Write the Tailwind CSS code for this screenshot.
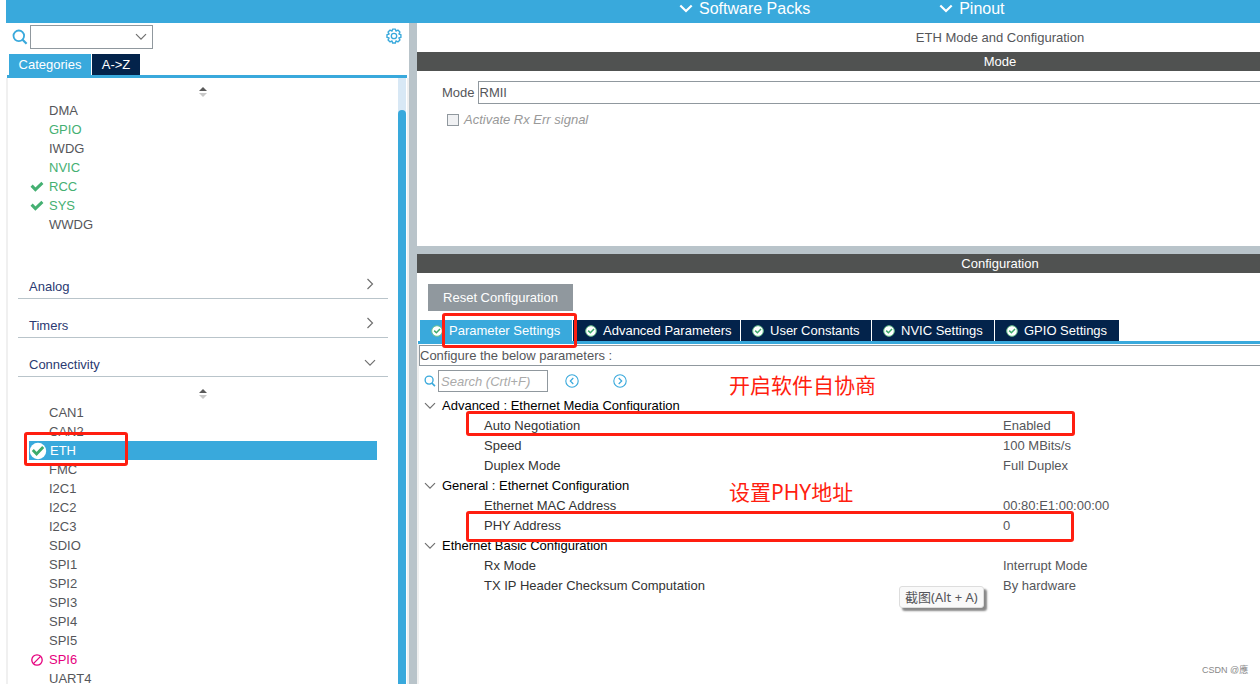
<!DOCTYPE html>
<html lang="en">
<head>
<meta charset="utf-8">
<title>ETH Mode and Configuration</title>
<script src="https://cdn.jsdelivr.net/npm/@tailwindcss/browser@4"></script>
</head>
<body class="bg-white">
<svg class="hidden" xmlns="http://www.w3.org/2000/svg">
  <symbol id="magnifier" viewBox="0 0 16 16"><circle cx="6.8" cy="6.8" r="5.3" fill="none" stroke="#39a9dc" stroke-width="1.8"/><path d="M10.6 10.8 14.6 14.8" stroke="#39a9dc" stroke-width="2.2"/></symbol>
  <symbol id="down" viewBox="0 0 12 8"><path d="M1 1.2 6 6.2 11 1.2" fill="none" stroke="currentColor" stroke-width="1.2"/></symbol>
  <symbol id="down-bold" viewBox="0 0 14 9"><path d="M1.3 1.5 7 7 12.7 1.5" fill="none" stroke="currentColor" stroke-width="2.2"/></symbol>
  <symbol id="right" viewBox="0 0 8 12"><path d="M1.5 1 6.5 6 1.5 11" fill="none" stroke="currentColor" stroke-width="1.2"/></symbol>
  <symbol id="sorter" viewBox="0 0 8 12"><path d="M0 5 4 1 8 5Z" fill="#5a5a5a"/><path d="M0 7H8L4 11Z" fill="#c8c8c8"/></symbol>
  <symbol id="tick" viewBox="0 0 14 12"><path d="M1.6 4.6 5.4 8.6 12.4 1.8" fill="none" stroke="#45b072" stroke-width="3"/></symbol>
  <symbol id="tick-circle" viewBox="0 0 18 18"><circle cx="9" cy="9" r="8.2" fill="#fff"/><path d="M3.8 8 7.6 12 14.2 5" fill="none" stroke="#3dab6b" stroke-width="2.8"/></symbol>
  <symbol id="tab-tick" viewBox="0 0 12 12"><circle cx="6" cy="6" r="5.3" fill="#fff" stroke="#6cc48f" stroke-width="1"/><path d="M3.2 5.6 5.4 7.8 9 4.1" fill="none" stroke="#3dab6b" stroke-width="1.5"/></symbol>
  <symbol id="banned" viewBox="0 0 12 12"><circle cx="6" cy="6" r="5.2" fill="none" stroke="#e6007e" stroke-width="1.3"/><path d="M2.4 9.6 9.6 2.4" stroke="#e6007e" stroke-width="1.3"/></symbol>
  <symbol id="gear" viewBox="0 0 18 18"><path d="M7.6 1.2h2.8l.6 2 1.9-1 2 2-1 1.9 2 .6v2.8l-2 .6 1 1.9-2 2-1.9-1-.6 2.1H7.6l-.6-2.1-1.9 1-2-2 1-1.9-2.1-.6V6.700l2.100-.6-1-1.900 2-2 1.900 1Z" transform="translate(0 .9)" fill="none" stroke="#39a9dc" stroke-width="1.4" stroke-linejoin="round"/><circle cx="9" cy="9" r="2.700" fill="none" stroke="#39a9dc" stroke-width="1.300"/></symbol>
  <symbol id="prev" viewBox="0 0 14 14"><circle cx="7" cy="7" r="6.2" fill="none" stroke="#39a9dc" stroke-width="1.1"/><path d="M8.3 4 5.3 7 8.3 10" fill="none" stroke="#39a9dc" stroke-width="1.2"/></symbol>
  <symbol id="next" viewBox="0 0 14 14"><circle cx="7" cy="7" r="6.2" fill="none" stroke="#39a9dc" stroke-width="1.1"/><path d="M5.7 4 8.7 7 5.7 10" fill="none" stroke="#39a9dc" stroke-width="1.2"/></symbol>
</svg>

<div class="relative flex h-screen flex-col overflow-hidden pl-1.5 font-['Liberation_Sans',Arial,sans-serif] text-[13px] leading-[19px] text-[#55565a]">
  <nav class="flex h-[23px] shrink-0 items-start gap-[129px] bg-[#39a9dc] pl-[673px] text-base leading-[17px] text-white">
    <button class="flex items-center gap-1.5"><svg class="h-[9px] w-3.5"><use href="#down-bold"/></svg>Software Packs</button>
    <button class="flex items-center gap-1.5"><svg class="h-[9px] w-3.5"><use href="#down-bold"/></svg>Pinout</button>
  </nav>

  <div class="flex min-h-0 flex-1">
    <aside class="flex w-[403px] shrink-0 flex-col">
      <div class="flex h-[31px] shrink-0 items-start pt-0.5 pr-1.5 pl-1.5">
        <svg class="mt-1 size-4"><use href="#magnifier"/></svg>
        <div class="relative ml-0.5">
          <select aria-label="Search peripherals" class="block h-6 w-[123px] appearance-none border border-[#90989e] bg-white"><option></option></select>
          <svg class="pointer-events-none absolute top-2 right-1.5 h-2 w-3 text-[#707070]"><use href="#down"/></svg>
        </div>
        <button aria-label="Settings" class="mt-0.5 ml-auto"><svg class="size-[18px]"><use href="#gear"/></svg></button>
      </div>
      <div class="mr-0.5 ml-px flex h-6 shrink-0 gap-px border-b-3 border-[#39a9dc] pl-0.5 text-white">
        <button class="w-[82px] bg-[#39a9dc]">Categories</button>
        <button class="w-12 bg-[#03234b]">A-&gt;Z</button>
      </div>
      <div class="flex min-h-0 flex-1 border-x-2 border-[#f0f0f0]">
        <div class="min-w-0 flex-1 overflow-hidden">
          <div class="flex h-[23px] justify-center pt-2"><svg class="h-3 w-2"><use href="#sorter"/></svg></div>
          <ul class="mx-[21px] h-[159px]">
            <li class="pl-5">DMA</li>
            <li class="pl-5 text-[#45b072]">GPIO</li>
            <li class="pl-5">IWDG</li>
            <li class="pl-5 text-[#45b072]">NVIC</li>
            <li class="flex items-center gap-1 text-[#45b072]"><span class="flex w-4 justify-center"><svg class="h-3 w-3.5"><use href="#tick"/></svg></span>RCC</li>
            <li class="flex items-center gap-1 text-[#45b072]"><span class="flex w-4 justify-center"><svg class="h-3 w-3.5"><use href="#tick"/></svg></span>SYS</li>
            <li class="pl-5">WWDG</li>
          </ul>
          <div class="mx-2.5 text-[#2b3a72]">
            <button class="flex h-[39px] w-full items-end justify-between border-b border-[#b9c4ca] pr-3.5 pb-0.5 pl-[11px]">Analog<svg class="mb-1.5 h-3 w-2 text-[#707070]"><use href="#right"/></svg></button>
            <button class="flex h-[39px] w-full items-end justify-between border-b border-[#b9c4ca] pr-3.5 pb-0.5 pl-[11px]">Timers<svg class="mb-1.5 h-3 w-2 text-[#707070]"><use href="#right"/></svg></button>
            <button class="flex h-[39px] w-full items-end justify-between border-b border-[#b9c4ca] pr-3 pb-0.5 pl-[11px]">Connectivity<svg class="mb-[7px] h-2 w-3 text-[#707070]"><use href="#down"/></svg></button>
          </div>
          <div class="flex h-[26px] justify-center pt-[11px]"><svg class="h-3 w-2"><use href="#sorter"/></svg></div>
          <ul class="mx-[21px]">
            <li class="pl-5">CAN1</li>
            <li class="pl-5">CAN2</li>
            <li class="flex h-[19px] items-center gap-[3px] bg-[#39a9dc] text-white"><svg class="size-[18px]"><use href="#tick-circle"/></svg>ETH</li>
            <li class="pl-5">FMC</li>
            <li class="pl-5">I2C1</li>
            <li class="pl-5">I2C2</li>
            <li class="pl-5">I2C3</li>
            <li class="pl-5">SDIO</li>
            <li class="pl-5">SPI1</li>
            <li class="pl-5">SPI2</li>
            <li class="pl-5">SPI3</li>
            <li class="pl-5">SPI4</li>
            <li class="pl-5">SPI5</li>
            <li class="flex items-center gap-1 text-[#e6007e]"><span class="flex w-4 justify-center"><svg class="size-3"><use href="#banned"/></svg></span>SPI6</li>
            <li class="pl-5">UART4</li>
          </ul>
        </div>
        <div class="mr-px w-2 bg-[#d8e8f5] pt-8"><div class="h-full rounded-t bg-[#39a9dc]"></div></div>
      </div>
    </aside>

    <div class="w-2 shrink-0 bg-[#b9c4ca]"></div>

    <main class="min-w-0 flex-1 overflow-hidden">
      <div class="flex h-full min-w-[1166px] flex-col">
        <h1 class="h-[29px] pt-[5px] text-center">ETH Mode and Configuration</h1>
        <h2 class="h-[19px] bg-[#505251] text-center text-white">Mode</h2>
        <section class="h-[175px] pt-2.5 pl-[25px]">
          <div class="flex items-center gap-[3px]">
            <label for="mode">Mode</label>
            <select id="mode" class="h-[23px] flex-1 appearance-none border border-[#90989e] bg-white pl-px"><option>RMII</option></select>
          </div>
          <label class="mt-1.5 ml-[5px] flex items-center gap-[5px] text-[#999] italic"><input type="checkbox" disabled class="size-3 appearance-none border border-[#90989e] bg-[#f0f1f3]">Activate Rx Err signal</label>
        </section>
        <div class="h-2 bg-[#b9c4ca]"></div>
        <h2 class="h-[19px] bg-[#505251] text-center text-white">Configuration</h2>
        <section class="flex min-h-0 flex-1 flex-col pt-[11px]">
          <button class="ml-[11px] block h-[27px] w-[145px] bg-[#90989e] text-white">Reset Configuration</button>
          <div class="mt-[9px] ml-px flex h-6 gap-px border-b-3 border-[#39a9dc] pl-0.5 text-white">
            <button class="flex w-[152px] items-center gap-1.5 bg-[#39a9dc] pl-[11px]"><svg class="size-3"><use href="#tab-tick"/></svg>Parameter Settings</button>
            <button class="flex w-[167px] items-center gap-1.5 bg-[#03234b] pl-3"><svg class="size-3"><use href="#tab-tick"/></svg>Advanced Parameters</button>
            <button class="flex w-[130px] items-center gap-1.5 bg-[#03234b] pl-[11px]"><svg class="size-3"><use href="#tab-tick"/></svg>User Constants</button>
            <button class="flex w-[122px] items-center gap-1.5 bg-[#03234b] pl-[11px]"><svg class="size-3"><use href="#tab-tick"/></svg>NVIC Settings</button>
            <button class="flex w-[124px] items-center gap-1.5 bg-[#03234b] pl-[11px]"><svg class="size-3"><use href="#tab-tick"/></svg>GPIO Settings</button>
          </div>
          <div class="min-h-0 flex-1 border-l-2 border-[#f0f0f0] pt-px">
            <p class="h-[21px] border border-[#90989e]">Configure the below parameters :</p>
            <div class="flex h-[30px] items-center pl-[5px]">
              <svg class="mr-0.5 size-3"><use href="#magnifier"/></svg>
              <input type="search" aria-label="Search parameters" placeholder="Search (Crtl+F)" class="h-[22px] w-[110px] border border-[#90989e] px-0.5 italic placeholder:text-[#aaa]">
              <button aria-label="Previous" class="ml-[17px]"><svg class="size-3.5"><use href="#prev"/></svg></button>
              <button aria-label="Next" class="ml-[34px]"><svg class="size-3.5"><use href="#next"/></svg></button>
            </div>
            <table class="w-full table-fixed border-collapse leading-5">
              <colgroup><col class="w-[584px]"><col></colgroup>
              <tbody>
                <tr><th colspan="2" class="p-0 pl-[5px] text-left font-normal text-black"><button class="flex items-center gap-1.5"><svg class="h-2 w-3 text-[#707070]"><use href="#down"/></svg>Advanced : Ethernet Media Configuration</button></th></tr>
                <tr><td class="p-0 pl-[65px] text-[#333]">Auto Negotiation</td><td class="p-0">Enabled</td></tr>
                <tr><td class="p-0 pl-[65px] text-[#333]">Speed</td><td class="p-0">100 MBits/s</td></tr>
                <tr><td class="p-0 pl-[65px] text-[#333]">Duplex Mode</td><td class="p-0">Full Duplex</td></tr>
                <tr><th colspan="2" class="p-0 pl-[5px] text-left font-normal text-black"><button class="flex items-center gap-1.5"><svg class="h-2 w-3 text-[#707070]"><use href="#down"/></svg>General : Ethernet Configuration</button></th></tr>
                <tr><td class="p-0 pl-[65px] text-[#333]">Ethernet MAC Address</td><td class="p-0">00:80:E1:00:00:00</td></tr>
                <tr><td class="p-0 pl-[65px] text-[#333]">PHY Address</td><td class="p-0">0</td></tr>
                <tr><th colspan="2" class="p-0 pl-[5px] text-left font-normal text-black"><button class="flex items-center gap-1.5"><svg class="h-2 w-3 text-[#707070]"><use href="#down"/></svg>Ethernet Basic Configuration</button></th></tr>
                <tr><td class="p-0 pl-[65px] text-[#333]">Rx Mode</td><td class="p-0">Interrupt Mode</td></tr>
                <tr><td class="p-0 pl-[65px] text-[#333]">TX IP Header Checksum Computation</td><td class="p-0">By hardware</td></tr>
              </tbody>
            </table>
          </div>
        </section>
      </div>
    </main>
  </div>

  <!-- Annotations drawn over the window -->
  <div class="pointer-events-none absolute top-[432px] left-6 h-[34px] w-[104px] rounded-[3px] border-3 border-[#ff1e10]"></div>
  <div class="pointer-events-none absolute top-[313px] left-[442px] h-[35px] w-[135px] rounded-[3px] border-3 border-[#ff1e10]"></div>
  <div class="pointer-events-none absolute top-[411px] left-[466px] h-[25px] w-[609px] rounded-[3px] border-3 border-[#ff1e10]"></div>
  <div class="pointer-events-none absolute top-[511px] left-[466px] h-[31px] w-[608px] rounded-[3px] border-3 border-[#ff1e10]"></div>
  <p lang="zh" class="absolute top-[369px] left-[729px] font-['Noto_Sans_CJK_SC',sans-serif] text-[21px] leading-[30px] text-[#ff1e10]">开启软件自协商</p>
  <p lang="zh" class="absolute top-[477px] left-[729px] font-['Noto_Sans','Noto_Sans_CJK_SC',sans-serif] text-[21px] leading-[30px] text-[#ff1e10]">设置PHY地址</p>
  <div role="tooltip" lang="zh" class="absolute top-[586px] left-[899px] rounded-[3px] border border-[#ddd] bg-[#f9f9f9] px-[5px] font-['Noto_Sans','Noto_Sans_CJK_SC',sans-serif] text-[13px] leading-5 whitespace-nowrap shadow-[3px_3px_2px_#888]">截图(Alt + A)</div>
  <p lang="zh" class="absolute top-[664px] left-[1202px] font-['Liberation_Sans','Noto_Sans_CJK_SC',sans-serif] text-[9px] leading-3 whitespace-nowrap text-[#888]">CSDN @應</p>
</div>
</body>
</html>
